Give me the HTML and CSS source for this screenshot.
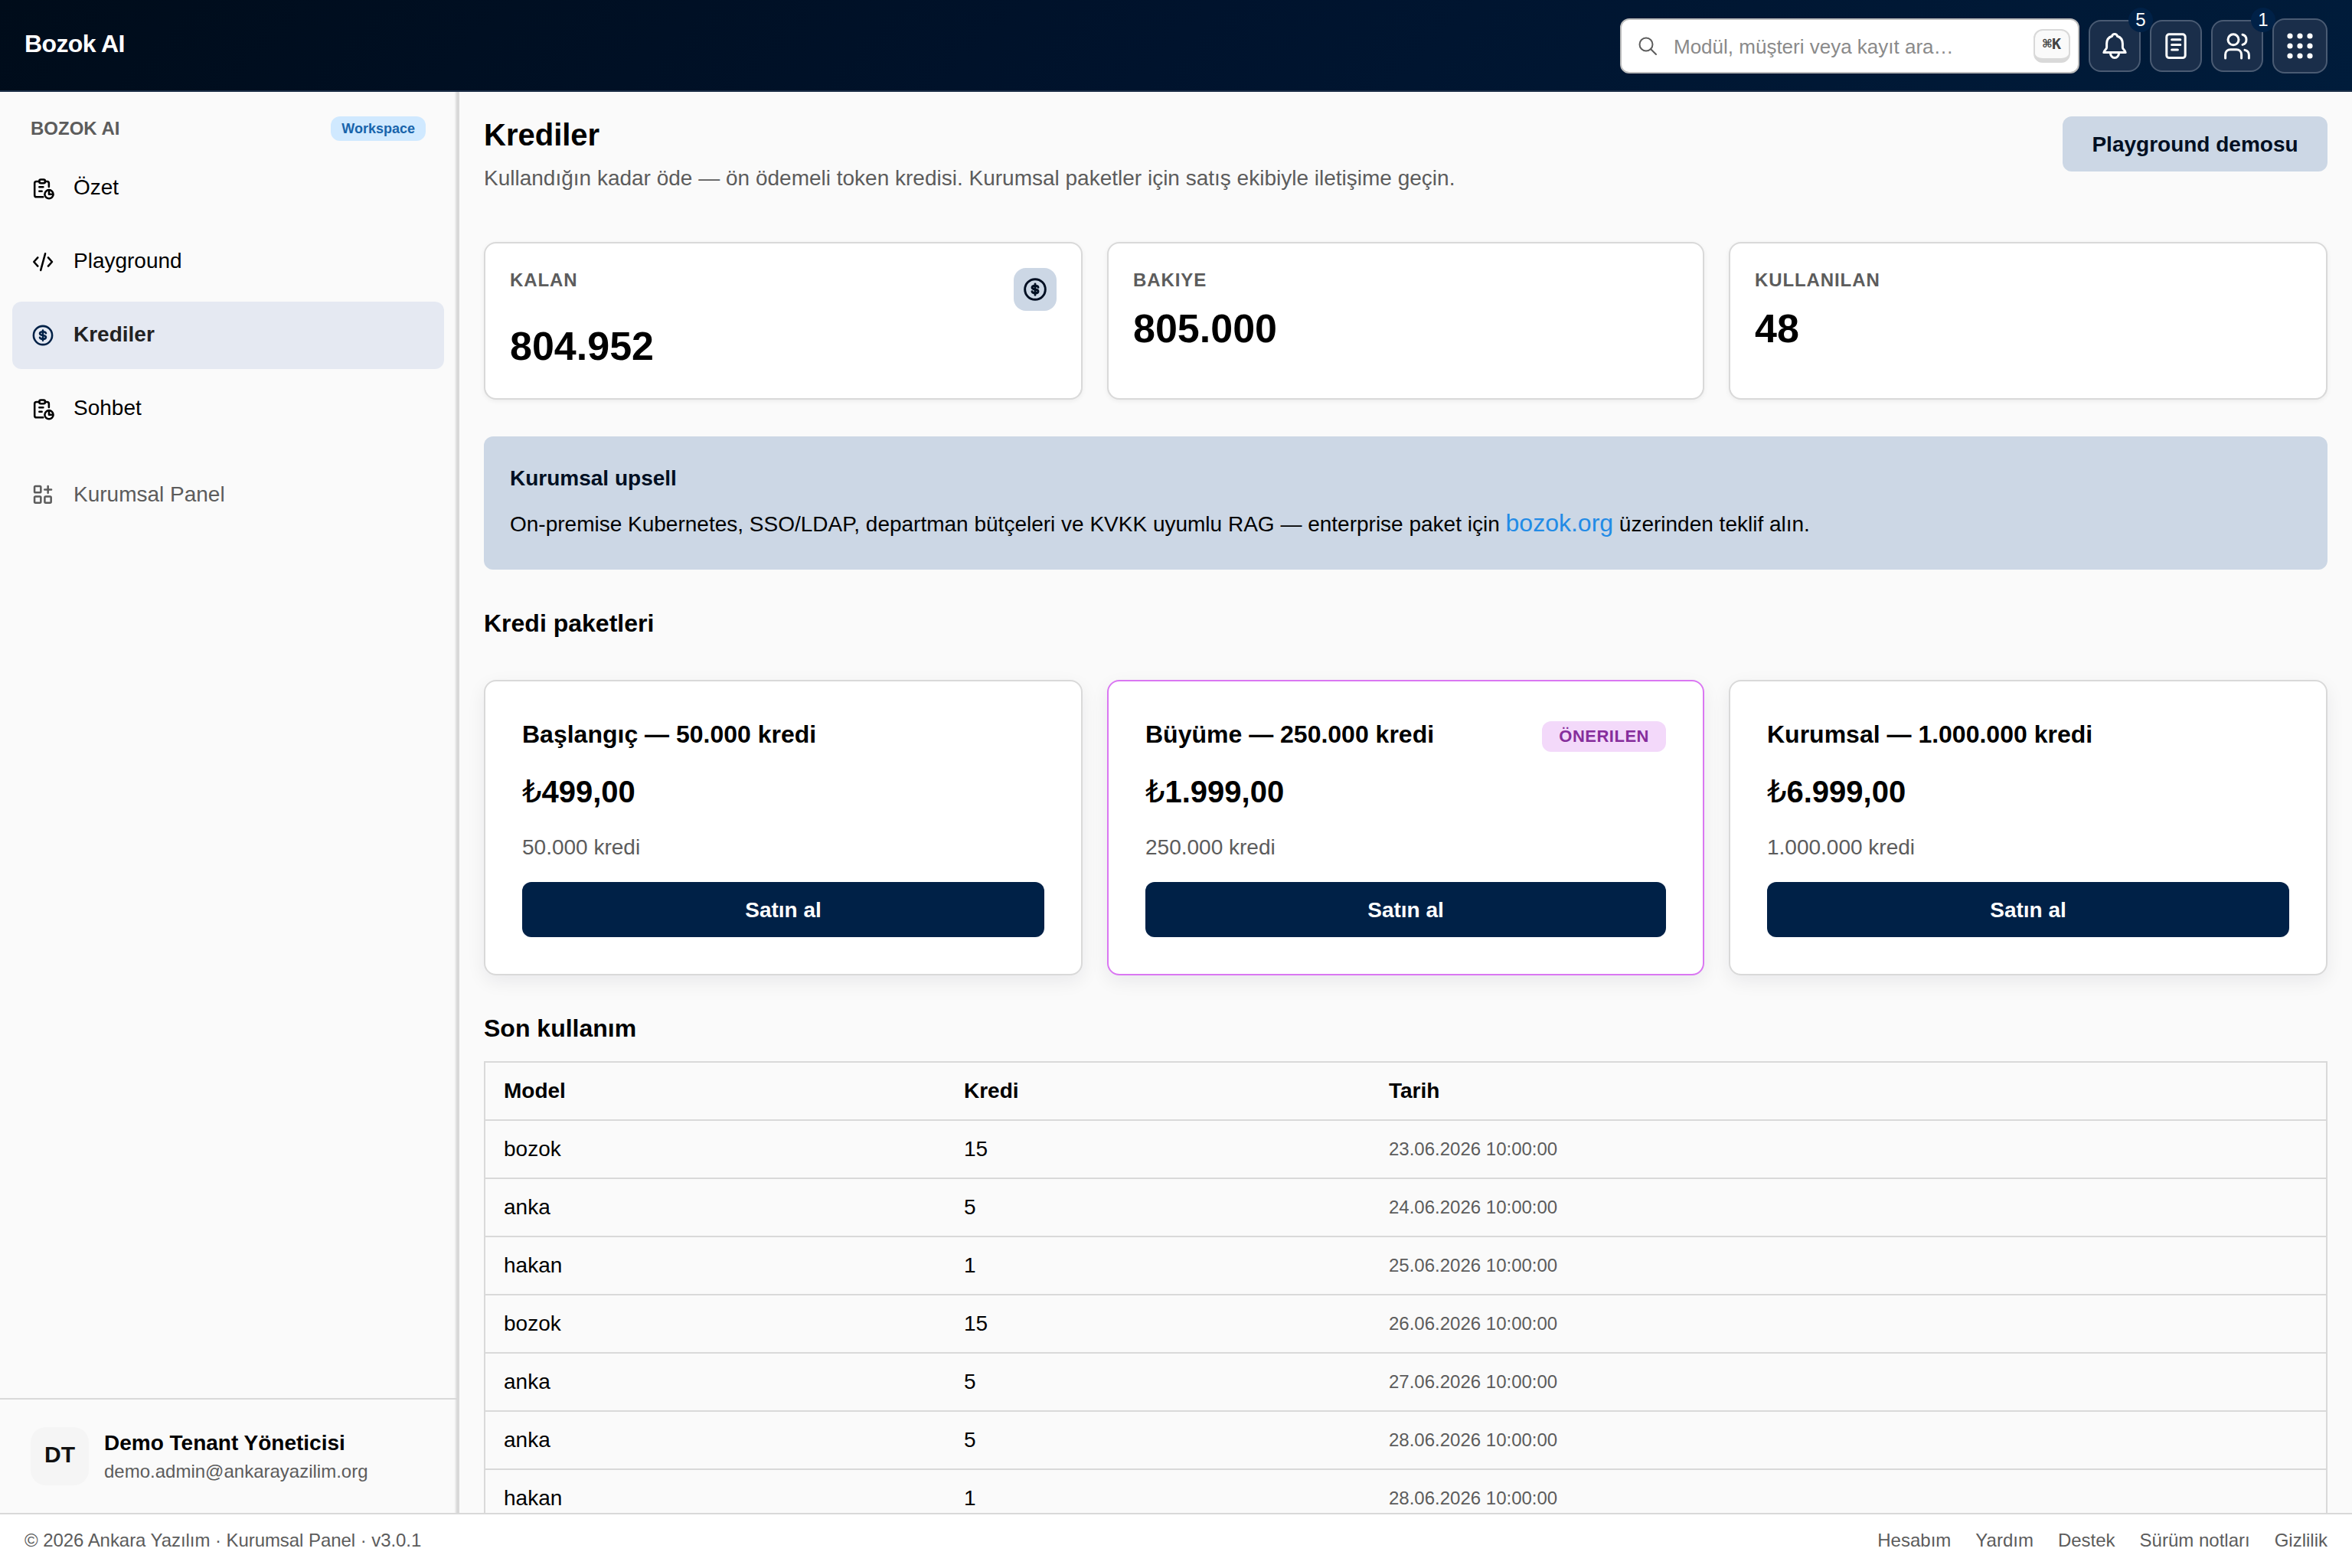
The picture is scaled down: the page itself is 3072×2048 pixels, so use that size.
FILE: index.html
```
<!DOCTYPE html>
<html lang="tr">
<head>
    <meta charset="UTF-8">
    <title>Bozok AI - Krediler</title>
    <link rel="stylesheet" href="styles.css">
</head>
<body>
    <header class="topbar">
        <div class="brand">Bozok AI</div>
        <div class="topbar-actions">
            <div class="search">
                <svg class="search-icon" viewBox="0 0 28 28"><circle cx="12" cy="12" r="8.500"/><path d="M18.200 18.200 25 25"/></svg>
                <span class="search-text">Modül, müşteri veya kayıt ara…</span>
                <kbd>⌘K</kbd>
            </div>
            <button class="icon-btn" aria-label="Bildirimler">
                <svg viewBox="0 0 20 20"><path d="M10 2.300c-.9 0-1.500.5-1.700 1.300C6 4.300 4.800 6 4.800 8.500V11c0 1.200-1.800 1.800-1.900 3.300h14.200c-.1-1.500-1.900-2.100-1.900-3.300V8.500c0-2.500-1.200-4.200-3.500-4.900-.2-.8-.8-1.300-1.700-1.300z"/><path d="M7.200 14.500c0 1.700 1.200 3.300 2.800 3.300s2.800-1.600 2.800-3.300"/></svg>
                <span class="count">5</span>
            </button>
            <button class="icon-btn" aria-label="Notlar">
                <svg viewBox="0 0 20 20"><rect x="3.900" y="2.400" width="12.200" height="15.400" rx="1.700"/><path d="M7.300 5.900h5.600M7.300 9.200h5.600M7.300 12.500h3.900"/></svg>
            </button>
            <button class="icon-btn" aria-label="Kişiler">
                <svg viewBox="0 0 20 20"><circle cx="7.500" cy="5.900" r="3.500"/><path d="M13.500 2.600c1.600.4 2.500 1.800 2.500 3.300s-.9 2.900-2.500 3.300M2.300 18v-2.300c0-1.900 1.400-3.300 3.300-3.300h3.900c1.900 0 3.300 1.400 3.300 3.300V18M15 12.700c1.700.4 2.700 1.500 2.700 3.300v2"/></svg>
                <span class="count">1</span>
            </button>
            <button class="icon-btn icon-btn-lg" aria-label="Uygulamalar">
                <svg class="dots" viewBox="0 0 20 20"><circle cx="3.500" cy="3.500" r="1.800"/><circle cx="10" cy="3.500" r="1.800"/><circle cx="16.500" cy="3.500" r="1.800"/><circle cx="3.500" cy="10" r="1.800"/><circle cx="10" cy="10" r="1.800"/><circle cx="16.500" cy="10" r="1.800"/><circle cx="3.500" cy="16.500" r="1.800"/><circle cx="10" cy="16.500" r="1.800"/><circle cx="16.500" cy="16.500" r="1.800"/></svg>
            </button>
        </div>
    </header>

    <div class="shell">
        <aside class="sidebar">
            <div class="sidebar-head">
                <span class="sidebar-title">BOZOK AI</span>
                <span class="tag">Workspace</span>
            </div>
            <nav>
                <a class="nav-item">
                    <svg viewBox="0 0 24 24"><path d="M8.500 5.200H5.700c-1 0-1.800.8-1.800 1.800v11.700c0 1 .8 1.800 1.800 1.800h6.500M14.200 5.200h1.900c1 0 1.800.8 1.800 1.800v3.500M8.500 10.700h3.800M8.500 14.800h2.500"/><rect x="8.500" y="3.300" width="5.700" height="3.600" rx="1.500"/><circle cx="18" cy="17.800" r="4.200"/><path d="M18 15v2.800h2.800"/></svg>
                    <span>Özet</span>
                </a>
                <a class="nav-item">
                    <svg viewBox="0 0 24 24"><path d="M7 7.800 3.200 12 7 16.200M17.200 7.800 21 12l-3.800 4.200M14.300 4 9.900 20.200"/></svg>
                    <span>Playground</span>
                </a>
                <a class="nav-item active">
                    <svg viewBox="0 0 24 24"><circle cx="12" cy="12" r="9.100"/><path d="M15 9.900c-.2-.9-1.300-1.500-3-1.500-1.800 0-3 .6-3 1.800s1.100 1.600 3 1.800 3 .7 3 1.900-1.200 1.800-3 1.800c-1.700 0-2.800-.6-3-1.600M12 7.200v9.800"/></svg>
                    <span>Krediler</span>
                </a>
                <a class="nav-item">
                    <svg viewBox="0 0 24 24"><path d="M8.500 5.200H5.700c-1 0-1.800.8-1.800 1.800v11.700c0 1 .8 1.800 1.800 1.800h6.500M14.200 5.200h1.900c1 0 1.800.8 1.800 1.800v3.500M8.500 10.700h3.800M8.500 14.800h2.500"/><rect x="8.500" y="3.300" width="5.700" height="3.600" rx="1.500"/><circle cx="18" cy="17.800" r="4.200"/><path d="M18 15v2.800h2.800"/></svg>
                    <span>Sohbet</span>
                </a>
                <a class="nav-item muted">
                    <svg viewBox="0 0 24 24"><rect x="3.800" y="3.800" width="6.200" height="6.200" rx="1"/><rect x="3.800" y="13.800" width="6.200" height="6.200" rx="1"/><rect x="13.800" y="13.800" width="6.200" height="6.200" rx="1"/><path d="M17 3.800v6.600M13.700 7.100h6.600"/></svg>
                    <span>Kurumsal Panel</span>
                </a>
            </nav>
            <div class="user">
                <div class="avatar">DT</div>
                <div>
                    <div class="user-name">Demo Tenant Yöneticisi</div>
                    <div class="user-mail">demo.admin@ankarayazilim.org</div>
                </div>
            </div>
        </aside>

        <main class="content">
            <div class="page-head">
                <div>
                    <h1>Krediler</h1>
                    <p class="lead">Kullandığın kadar öde — ön ödemeli token kredisi. Kurumsal paketler için satış ekibiyle iletişime geçin.</p>
                </div>
                <button class="btn btn-soft">Playground demosu</button>
            </div>

            <div class="stats">
                <div class="stat">
                    <div class="stat-head">
                        <span class="stat-label">KALAN</span>
                        <span class="stat-icon"><svg viewBox="0 0 24 24"><circle cx="12" cy="12" r="10"/><path d="M15 9.900c-.2-.9-1.300-1.500-3-1.500-1.800 0-3 .6-3 1.800s1.100 1.600 3 1.800 3 .7 3 1.900-1.200 1.800-3 1.800c-1.700 0-2.800-.6-3-1.600M12 6.700v10.800"/></svg></span>
                    </div>
                    <div class="stat-value">804.952</div>
                </div>
                <div class="stat">
                    <div class="stat-head"><span class="stat-label">BAKIYE</span></div>
                    <div class="stat-value">805.000</div>
                </div>
                <div class="stat">
                    <div class="stat-head"><span class="stat-label">KULLANILAN</span></div>
                    <div class="stat-value">48</div>
                </div>
            </div>

            <div class="upsell">
                <div class="upsell-title">Kurumsal upsell</div>
                <p>On-premise Kubernetes, SSO/LDAP, departman bütçeleri ve KVKK uyumlu RAG — enterprise paket için <a class="link">bozok.org</a> üzerinden teklif alın.</p>
            </div>

            <h2>Kredi paketleri</h2>
            <div class="packages">
                <div class="package">
                    <div class="package-head"><h3>Başlangıç — 50.000 kredi</h3></div>
                    <div class="price"><span class="lira">₺</span>499,00</div>
                    <div class="amount">50.000 kredi</div>
                    <button class="btn btn-primary">Satın al</button>
                </div>
                <div class="package featured">
                    <div class="package-head"><h3>Büyüme — 250.000 kredi</h3><span class="badge">ÖNERILEN</span></div>
                    <div class="price"><span class="lira">₺</span>1.999,00</div>
                    <div class="amount">250.000 kredi</div>
                    <button class="btn btn-primary">Satın al</button>
                </div>
                <div class="package">
                    <div class="package-head"><h3>Kurumsal — 1.000.000 kredi</h3></div>
                    <div class="price"><span class="lira">₺</span>6.999,00</div>
                    <div class="amount">1.000.000 kredi</div>
                    <button class="btn btn-primary">Satın al</button>
                </div>
            </div>

            <h2 class="usage-title">Son kullanım</h2>
            <table class="usage">
                <thead>
                    <tr><th class="col-model">Model</th><th class="col-credit">Kredi</th><th>Tarih</th></tr>
                </thead>
                <tbody>
                    <tr><td>bozok</td><td>15</td><td class="date">23.06.2026 10:00:00</td></tr>
                    <tr><td>anka</td><td>5</td><td class="date">24.06.2026 10:00:00</td></tr>
                    <tr><td>hakan</td><td>1</td><td class="date">25.06.2026 10:00:00</td></tr>
                    <tr><td>bozok</td><td>15</td><td class="date">26.06.2026 10:00:00</td></tr>
                    <tr><td>anka</td><td>5</td><td class="date">27.06.2026 10:00:00</td></tr>
                    <tr><td>anka</td><td>5</td><td class="date">28.06.2026 10:00:00</td></tr>
                    <tr><td>hakan</td><td>1</td><td class="date">28.06.2026 10:00:00</td></tr>
                </tbody>
            </table>
        </main>
    </div>

    <footer class="footer">
        <span class="copyright">© 2026 Ankara Yazılım · Kurumsal Panel · v3.0.1</span>
        <div class="footer-links">
            <a>Hesabım</a>
            <a>Yardım</a>
            <a>Destek</a>
            <a>Sürüm notları</a>
            <a>Gizlilik</a>
        </div>
    </footer>
</body>
</html>
```
FILE: styles.css
```
* {
    box-sizing: border-box;
}
body {
    margin: 0;
    height: 2048px;
    display: flex;
    flex-direction: column;
    overflow: hidden;
    background: #fafafa;
    color: #000;
    font-family: "Liberation Sans", Arial, sans-serif;
    font-size: 28px;
}
h1, h2, h3, p {
    margin: 0;
}
svg {
    display: block;
    fill: none;
    stroke: currentColor;
    stroke-width: 1.9;
    stroke-linecap: round;
    stroke-linejoin: round;
}
button {
    font-family: inherit;
}

/* top bar */
.topbar {
    flex: none;
    display: flex;
    justify-content: space-between;
    height: 120px;
    padding: 0 32px;
    border-bottom: 2px solid #1c2e47;
    background: linear-gradient(135deg, #000c1a 0%, #00132d 50%, #001c3b 100%);
    color: #fff;
}
.brand {
    padding-top: 37px;
    font-size: 32px;
    line-height: 40px;
    font-weight: bold;
    letter-spacing: -0.6px;
}
.topbar-actions {
    display: flex;
    align-items: center;
    gap: 12px;
    padding-top: 2px;
}
.search {
    display: flex;
    align-items: center;
    width: 600px;
    height: 72px;
    padding: 0 10px 0 20px;
    border: 2px solid #bdbdbd;
    border-radius: 12px;
    background: #fff;
}
.search-icon {
    width: 28px;
    height: 28px;
    color: #5c5c5c;
    stroke-width: 2;
}
.search-text {
    flex: 1;
    padding: 2px 0 0 20px;
    font-size: 26px;
    color: #8a8a8a;
}
kbd {
    width: 48px;
    height: 44px;
    border: 2px solid #d9d9d9;
    border-bottom-width: 6px;
    border-radius: 12px;
    background: #fafafa;
    color: #424242;
    font-family: "DejaVu Sans Mono", monospace;
    font-size: 20px;
    line-height: 34px;
    font-weight: bold;
    text-align: center;
}
.icon-btn {
    position: relative;
    display: flex;
    align-items: center;
    justify-content: center;
    width: 68px;
    height: 68px;
    padding: 0;
    border: 2px solid #4a5b73;
    border-radius: 16px;
    background: #1a2e4a;
    color: #fff;
}
.icon-btn svg {
    width: 40px;
    height: 40px;
    stroke-width: 1.5;
}
.icon-btn-lg {
    width: 72px;
    height: 72px;
}
.icon-btn .dots {
    fill: #fff;
    stroke: none;
}
.count {
    position: absolute;
    top: -18px;
    right: -18px;
    width: 32px;
    height: 32px;
    border-radius: 50%;
    background: #002147;
    font-size: 24px;
    line-height: 32px;
    text-align: center;
}

/* sidebar */
.shell {
    flex: 1;
    min-height: 0;
    display: flex;
}
.sidebar {
    flex: none;
    display: flex;
    flex-direction: column;
    width: 600px;
    border-right: 4px solid #d9d9d9;
    box-shadow: inset -2px 0 #ececec;
}
.sidebar-head {
    display: flex;
    align-items: center;
    justify-content: space-between;
    margin-bottom: 18px;
    padding: 32px 40px 0;
    height: 64px;
}
.sidebar-title {
    color: #5c5c5c;
    font-size: 24px;
    font-weight: bold;
}
.tag {
    height: 32px;
    padding: 0 14px;
    border-radius: 12px;
    background: #d0e9ff;
    color: #1864ab;
    font-size: 18px;
    line-height: 32px;
    font-weight: bold;
}
.nav-item {
    display: flex;
    align-items: center;
    height: 88px;
    margin: 0 16px 8px;
    padding: 0 24px;
    border-radius: 12px;
}
.nav-item svg {
    width: 32px;
    height: 32px;
    margin-right: 24px;
}
.nav-item span {
    padding-bottom: 2px;
}
.nav-item.active {
    background: #e5e9f2;
    color: #222;
    font-weight: bold;
}
.nav-item.active svg {
    color: #002147;
}
.nav-item.muted {
    margin-top: 24px;
    color: #5c5c5c;
}
.nav-item.muted span {
    padding-bottom: 0;
}
.user {
    display: flex;
    align-items: center;
    gap: 20px;
    height: 150px;
    margin-top: auto;
    padding: 0 40px;
    border-top: 2px solid #d9d9d9;
}
.avatar {
    width: 76px;
    height: 76px;
    border-radius: 20px;
    background: #f5f5f5;
    color: #111;
    font-size: 30px;
    line-height: 72px;
    font-weight: bold;
    text-align: center;
}
.user-name {
    line-height: 40px;
    font-weight: bold;
}
.user-mail {
    color: #5c5c5c;
    font-size: 24px;
    line-height: 34px;
}

/* content */
.content {
    flex: 1;
    min-width: 0;
    padding: 32px 32px 0;
    overflow: hidden;
}
.page-head {
    display: flex;
    justify-content: space-between;
    height: 164px;
}
h1 {
    font-size: 40px;
    line-height: 48px;
}
.lead {
    margin-top: 12px;
    color: #5c5c5c;
    line-height: 42px;
}
.btn {
    display: block;
    height: 72px;
    padding: 2px 0 0;
    border: 0;
    border-radius: 12px;
    font-size: 28px;
    font-weight: bold;
}
.btn-soft {
    width: 346px;
    background: #ccd7e5;
    color: #000f22;
}
.btn-primary {
    width: 100%;
    background: #002147;
    color: #fff;
}
.stats, .packages {
    display: grid;
    grid-template-columns: 1fr 780px 1fr;
    gap: 32px;
}
.stat {
    height: 206px;
    padding: 32px;
    border: 2px solid #d9d9d9;
    border-radius: 16px;
    background: #fff;
    box-shadow: 0 2px 6px rgba(0, 0, 0, 0.06);
}
.stat-head {
    display: flex;
    justify-content: space-between;
    margin-bottom: 8px;
}
.stat-label {
    padding-bottom: 2px;
    color: #5c5c5c;
    font-size: 24px;
    line-height: 31px;
    font-weight: bold;
    letter-spacing: 0.9px;
}
.stat-icon {
    padding: 12px;
    border-radius: 16px;
    background: #ccd7e5;
    color: #000f22;
}
.stat-icon svg {
    width: 32px;
    height: 32px;
    stroke-width: 2.2;
}
.stat-value {
    padding-top: 5px;
    font-size: 52px;
    line-height: 66px;
    font-weight: bold;
}
.upsell {
    height: 174px;
    margin-top: 48px;
    padding: 33px 34px;
    border-radius: 12px;
    background: #ccd7e5;
}
.upsell-title {
    color: #000f22;
    line-height: 44px;
    font-weight: bold;
}
.upsell p {
    margin-top: 11px;
    line-height: 50px;
}
.link {
    color: #228be6;
    font-size: 32px;
}
h2 {
    margin-top: 47px;
    font-size: 32px;
    line-height: 46px;
}
.packages {
    margin-top: 51px;
}
.package {
    height: 386px;
    padding: 48px;
    border: 2px solid #d9d9d9;
    border-radius: 16px;
    background: #fff;
    box-shadow: 0 8px 24px rgba(0, 15, 45, 0.07);
}
.package.featured {
    border-color: #da77f2;
}
.package-head {
    display: flex;
    justify-content: space-between;
    height: 44px;
}
h3 {
    font-size: 32px;
    line-height: 42px;
}
.badge {
    height: 40px;
    margin-top: 4px;
    padding: 0 22px;
    border-radius: 12px;
    background: #f3d9fa;
    color: #862e9c;
    font-size: 22px;
    line-height: 39px;
    font-weight: bold;
    letter-spacing: 0.5px;
}
.price {
    margin-top: 24px;
    font-size: 40px;
    line-height: 56px;
    font-weight: bold;
}
.lira {
    font-family: "DejaVu Sans", sans-serif;
    font-weight: normal;
    line-height: 1;
}
.amount {
    margin: 24px 0;
    color: #5c5c5c;
    line-height: 42px;
}
.usage-title {
    margin-top: 46px;
}
.usage {
    width: 100%;
    margin-top: 20px;
    border: 2px solid #d9d9d9;
    border-collapse: collapse;
    table-layout: fixed;
}
.usage tr {
    height: 76px;
}
.usage th, .usage td {
    padding: 0 24px;
    border-bottom: 2px solid #d9d9d9;
    text-align: left;
}
.usage .col-model {
    width: 602px;
}
.usage .col-credit {
    width: 555px;
}
.usage .date {
    color: #5c5c5c;
    font-size: 24px;
}

/* footer */
.footer {
    flex: none;
    display: flex;
    align-items: center;
    justify-content: space-between;
    height: 72px;
    padding: 0 32px 2px;
    border-top: 2px solid #d9d9d9;
    background: #fff;
    color: #5c5c5c;
    font-size: 24px;
}
.copyright {
    letter-spacing: -0.06px;
}
.footer-links {
    display: flex;
    gap: 32px;
}
```
